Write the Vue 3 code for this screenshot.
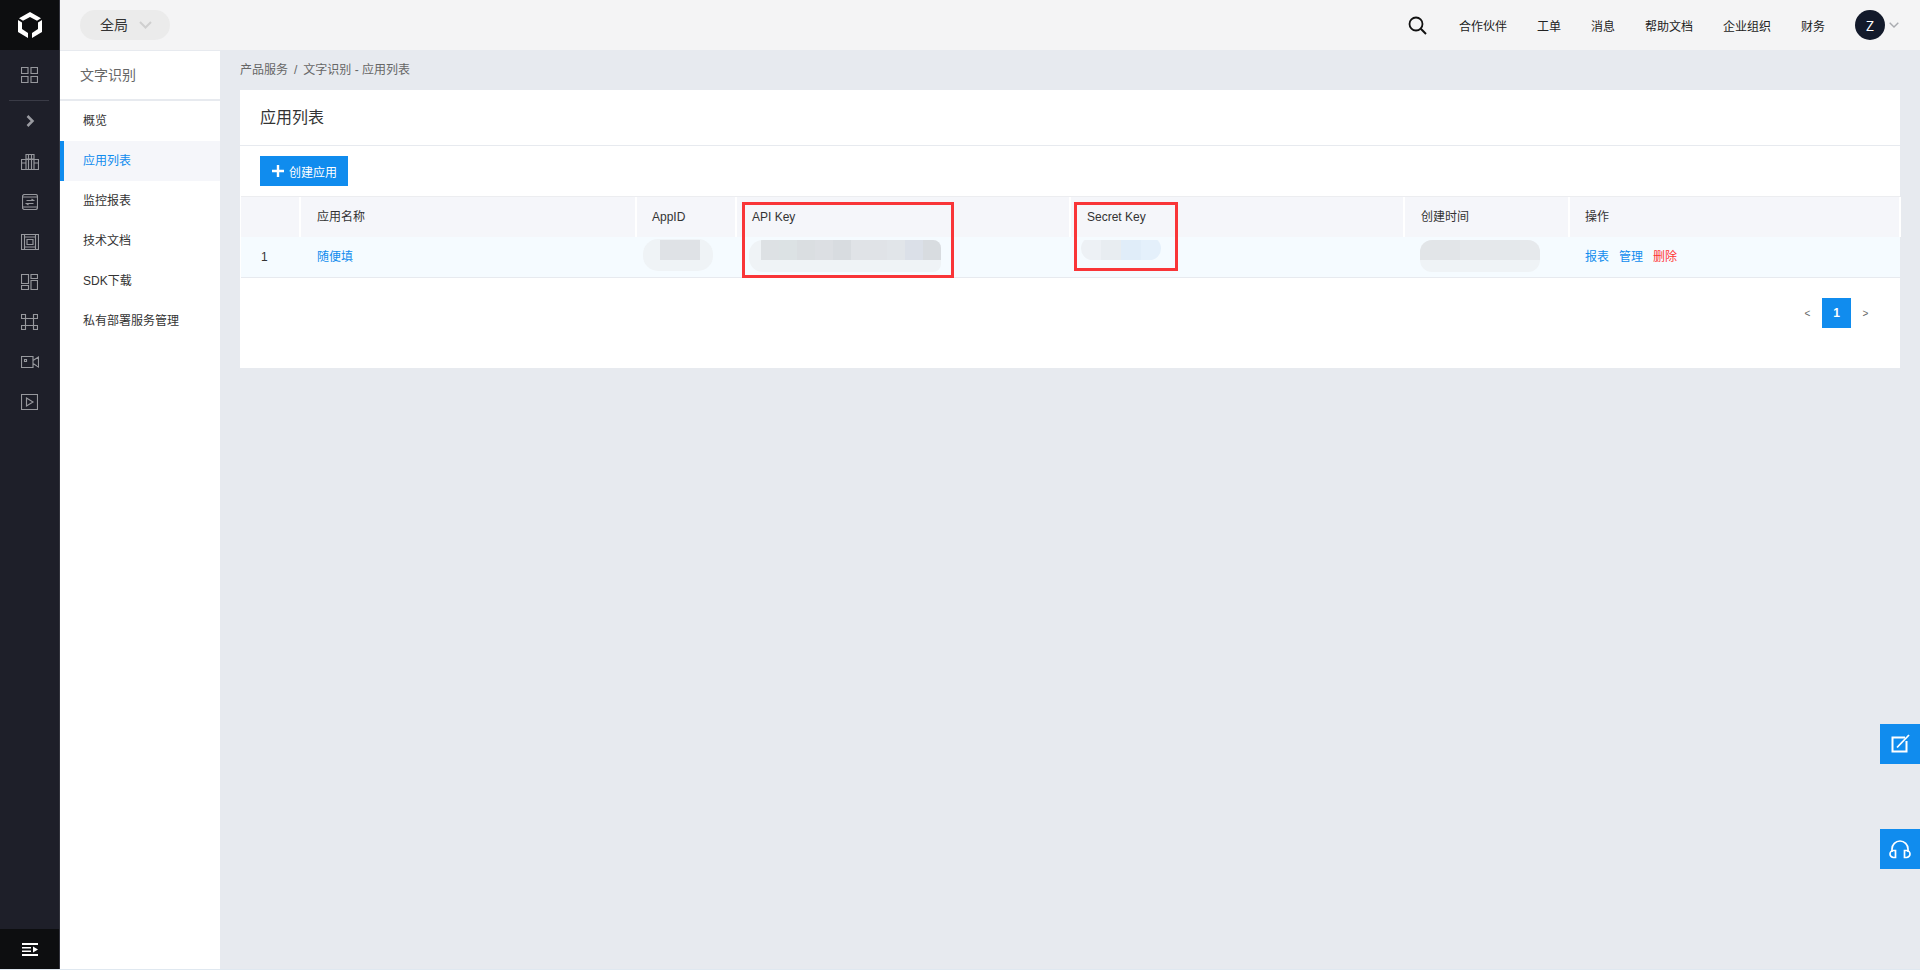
<script setup>
const menu = ['概览', '应用列表', '监控报表', '技术文档', 'SDK下载', '私有部署服务管理']
const nav = ['合作伙伴', '工单', '消息', '帮助文档', '企业组织', '财务']
const cols = [
  { t: '', w: 60 }, { t: '应用名称', w: 336 }, { t: 'AppID', w: 100 }, { t: 'API Key', w: 334 },
  { t: 'Secret Key', w: 334 }, { t: '创建时间', w: 165 }, { t: '操作', w: 331 },
]
const apiTiles = ['#dde1e4', '#dce2e4', '#dadee1', '#dcdfe3', '#d8dce0', '#e0e3e7', '#e0e3e7', '#e1e5e9', '#dbe0e8', '#d8dce0']
const appTiles = ['#dfe2e6', '#dfe2e6']
const secretTiles = ['#edf1f5', '#e8edf1', '#e0edf9', '#e4f0fb']
const timeTiles = ['#e2e5e8', '#e2e5e8', '#e5e8eb', '#e5e8eb', '#e4e8eb', '#e6e9ec']
</script>

<template>
  <div class="page">
    <aside class="rail">
      <div class="logo">
        <svg width="24" height="26" viewBox="0 0 24 26">
          <path fill="#fff" d="M12 0l11 6.200-4 2.600L12 5 5 8.800 1 6.200z" />
          <path fill="#fff" d="M0 8l4 2.500V17l6 4v5L0 20zM24 8l-4 2.500V17l-6 4v5l10-6z" />
        </svg>
      </div>
      <div class="rail-top">
        <svg width="17" height="16" viewBox="0 0 17 16" class="ico"><path d="M.5.500h6.500v6H.5zM10 .500h6.500v6H10zM.5 9.500h6.500v6H.5zM10 9.500h6.500v6H10z" /></svg>
      </div>
      <div class="rail-line"></div>
      <div class="rail-arrow">
        <svg width="9" height="12" viewBox="0 0 9 12"><path d="M1.500 1l5 5-5 5" fill="none" stroke="#9a9ba1" stroke-width="2.500" /></svg>
      </div>
      <div class="rail-item">
        <svg width="18" height="16" viewBox="0 0 18 16" class="ico"><path d="M.5 5.500h17v10H.5zM5 .5h8v15H5zM7.500 .5v15M10.500 .5v15M.5 9h4.500M13 9h4.500M5 5h8" /></svg>
      </div>
      <div class="rail-item">
        <svg width="16" height="16" viewBox="0 0 16 16" class="ico"><path d="M2.500.5h11a2 2 0 0 1 2 2v11a2 2 0 0 1-2 2h-11a2 2 0 0 1-2-2v-11a2 2 0 0 1 2-2zM1 3h14M1 13h14M4.500 6.500h7l-2-1.500M11.500 9.500h-7l2 1.500" /></svg>
      </div>
      <div class="rail-item">
        <svg width="18" height="16" viewBox="0 0 18 16" class="ico"><path d="M.5.500h17v15H.5zM3.500.5v15M14.500.5v15M3.500 3h11M3.500 13h11M6 5.500h6v5H6z" /></svg>
      </div>
      <div class="rail-item">
        <svg width="17" height="16" viewBox="0 0 17 16" class="ico"><path d="M.5.500h7v9h-7zM10 .500h6.500v4H10zM10 6.500h6.500v9H10zM.5 11.500h7v4h-7z" /></svg>
      </div>
      <div class="rail-item">
        <svg width="17" height="16" viewBox="0 0 17 16" class="ico"><path d="M.5.500h4v4h-4zM12.500.500h4v4h-4zM.5 11.500h4v4h-4zM12.500 11.500h4v4h-4zM4.500 4.500h8v7h-8z" /></svg>
      </div>
      <div class="rail-item">
        <svg width="18" height="12" viewBox="0 0 18 12" class="ico"><path d="M.5.500h11.500v11H.5zM12 4.500l5.500-3.500v10L12 7.500M3.500 3.500h2v2h-2z" /></svg>
      </div>
      <div class="rail-item">
        <svg width="17" height="16" viewBox="0 0 17 16" class="ico"><path d="M.5.500h16v15H.5zM5.500 4l6.500 4-6.500 4z" /></svg>
      </div>
      <div class="rail-foot">
        <svg width="16" height="13" viewBox="0 0 16 13">
          <path fill="#fff" d="M0 0h16v2H0zM0 4h9v1.500H0zM0 7.500h9V9H0zM0 11h16v2H0zM11 3.500l5 3-5 3z" />
        </svg>
      </div>
    </aside>

    <div class="shell">
      <header class="topbar">
        <div class="scope">
          <span>全局</span>
          <svg width="13" height="8" viewBox="0 0 13 8"><path d="M1 1l5.500 5.500L12 1" fill="none" stroke="#cfcfcf" stroke-width="2" /></svg>
        </div>
        <div class="grow"></div>
        <svg class="search" width="19" height="19" viewBox="0 0 19 19">
          <circle cx="8" cy="8" r="6.500" fill="none" stroke="#111" stroke-width="1.800" />
          <path d="M12.800 12.800L18 18" stroke="#111" stroke-width="2" />
        </svg>
        <nav class="nav">
          <a v-for="n in nav" :key="n">{{ n }}</a>
        </nav>
        <div class="avatar">Z</div>
        <svg class="caret" width="10" height="6" viewBox="0 0 10 6"><path d="M.7.700L5 5l4.300-4.300" fill="none" stroke="#a9abb0" stroke-width="1.400" /></svg>
      </header>

      <div class="body">
        <aside class="sub">
          <div class="sub-title">文字识别</div>
          <ul class="sub-list">
            <li v-for="(m, i) in menu" :key="m" :class="{ active: i === 1 }">{{ m }}</li>
          </ul>
        </aside>

        <main class="main">
          <div class="crumb">产品服务<span class="sep">/</span>文字识别 - 应用列表</div>
          <section class="card">
            <h2 class="card-title">应用列表</h2>
            <div class="tools">
              <button class="create">
                <svg width="12" height="12" viewBox="0 0 12 12"><path d="M6 0v12M0 6h12" stroke="#fff" stroke-width="2.400" /></svg>
                <span>创建应用</span>
              </button>
            </div>
            <div class="table">
              <div class="tr head">
                <div v-for="c in cols" :key="c.t" class="th" :style="{ width: c.w + 'px' }">{{ c.t }}</div>
              </div>
              <div class="tr row">
                <div class="td idx" :style="{ width: cols[0].w + 'px' }">1</div>
                <div class="td" :style="{ width: cols[1].w + 'px' }"><a class="link">随便填</a></div>
                <div class="td" :style="{ width: cols[2].w + 'px' }">
                  <div class="blur b-app"><div class="tiles"><i v-for="(t, i) in appTiles" :key="i" :style="{ background: t }"></i></div></div>
                </div>
                <div class="td" :style="{ width: cols[3].w + 'px' }">
                  <div class="blur b-api"><div class="tiles"><i v-for="(t, i) in apiTiles" :key="i" :style="{ background: t }"></i></div></div>
                </div>
                <div class="td" :style="{ width: cols[4].w + 'px' }">
                  <div class="blur b-secret"><div class="tiles"><i v-for="(t, i) in secretTiles" :key="i" :style="{ background: t }"></i></div></div>
                </div>
                <div class="td" :style="{ width: cols[5].w + 'px' }">
                  <div class="blur b-time"><div class="tiles"><i v-for="(t, i) in timeTiles" :key="i" :style="{ background: t }"></i></div></div>
                </div>
                <div class="td ops" :style="{ width: cols[6].w + 'px' }">
                  <a class="link">报表</a><a class="link">管理</a><a class="del">删除</a>
                </div>
              </div>
              <div class="mark m-api"></div>
              <div class="mark m-secret"></div>
            </div>
            <div class="pager">
              <span class="arrow">&lt;</span>
              <span class="cur">1</span>
              <span class="arrow">&gt;</span>
            </div>
          </section>
        </main>
      </div>
    </div>

    <div class="float f1">
      <svg width="20" height="20" viewBox="0 0 20 20"><path d="M15 3.500H2.500v14h14V7" fill="none" stroke="#fff" stroke-width="2" /><path d="M19 1L7 13.500" stroke="#fff" stroke-width="1.800" /></svg>
    </div>
    <div class="float f2">
      <svg width="22" height="20" viewBox="0 0 22 20"><path d="M3 13V10a8 8 0 0 1 16 0v3" fill="none" stroke="#fff" stroke-width="1.700" /><path d="M6.500 11.500v7H4.500a3.500 3.500 0 0 1 0-7zM15.500 11.500v7h2a3.500 3.500 0 0 0 0-7z" fill="none" stroke="#fff" stroke-width="1.700" /></svg>
    </div>
  </div>
</template>

<style scoped>
.page {
  position: relative;
  display: flex;
  height: 970px;
  overflow: hidden;
  background: #dfe8f0;
  font-family: "Liberation Sans", "Noto Sans CJK SC", sans-serif;
  font-size: 12px;
  color: #333;
}
.rail {
  display: flex;
  flex-direction: column;
  align-items: stretch;
  flex: none;
  width: 60px;
  height: 969px;
  box-sizing: border-box;
  background: #1e1f29;
  border-right: 1px solid #33343d;
}
.logo {
  display: flex;
  align-items: center;
  justify-content: center;
  height: 50px;
  background: #0d0e10;
}
.ico { fill: none; stroke: #97989d; stroke-width: 1.150; }
.rail-top { display: flex; align-items: center; justify-content: center; height: 50px; }
.rail-line { height: 1px; margin: 0 10px 0 9px; background: #3a3b46; }
.rail-arrow { display: flex; align-items: center; justify-content: center; height: 40px; padding-left: 2px; }
.rail-item { display: flex; align-items: center; justify-content: center; height: 40px; }
.rail-arrow + .rail-item { margin-top: 1px; }
.rail-foot {
  display: flex;
  align-items: center;
  justify-content: center;
  height: 40px;
  margin-top: auto;
  background: #0d0e10;
}
.shell { display: flex; flex-direction: column; flex: 1; min-width: 0; height: 969px; }
.topbar {
  display: flex;
  align-items: center;
  flex: none;
  height: 50px;
  padding-left: 20px;
  padding-right: 21px;
  background: #f4f4f5;
  border-bottom: 1px solid #e7eaef;
}
.scope {
  display: flex;
  align-items: center;
  gap: 11px;
  box-sizing: border-box;
  width: 90px;
  height: 30px;
  padding-left: 20px;
  border-radius: 15px;
  background: #ebebeb;
  font-size: 14px;
  line-height: 30px;
}
.grow { flex: 1; }
.search { margin-right: 32px; }
.nav { display: flex; gap: 30px; color: #222; font-size: 12px; }
.avatar {
  display: flex;
  align-items: center;
  justify-content: center;
  width: 30px;
  height: 30px;
  margin-left: 30px;
  border-radius: 50%;
  background: #131a2b;
  color: #fff;
  font-size: 14px;
  font-family: "Open Sans", sans-serif;
}
.caret { margin-left: 4px; }
.body { display: flex; flex: 1; min-height: 0; }
.sub { flex: none; width: 160px; background: #fff; }
.sub-title {
  height: 48px;
  padding-left: 20px;
  border-bottom: 2px solid #e7eaef;
  color: #666;
  font-size: 14px;
  line-height: 49px;
}
.sub-list { margin: 0; padding: 0; list-style: none; }
.sub-list li {
  height: 40px;
  padding-left: 23px;
  line-height: 40px;
  color: #333;
}
.sub-list li.active {
  padding-left: 19px;
  border-left: 4px solid #108cee;
  background: #f5f6fa;
  color: #108cee;
}
.main { flex: 1; min-width: 0; padding: 0 20px; background: #e7eaef; }
.crumb { height: 39px; line-height: 38px; color: #666; }
.sep { margin: 0 6px; }
.card { height: 278px; background: #fff; }
.card-title {
  margin: 0;
  height: 55px;
  padding-left: 20px;
  border-bottom: 1px solid #e7eaef;
  font-size: 16px;
  font-weight: 400;
  line-height: 55px;
  color: #333;
}
.tools { height: 50px; padding: 10px 0 0 20px; box-sizing: border-box; }
.create {
  display: flex;
  align-items: center;
  gap: 5px;
  width: 88px;
  height: 30px;
  padding: 0 0 0 12px;
  border: 0;
  background: #108cee;
  color: #fff;
  font: inherit;
}
.table {
  position: relative;
  margin-left: 1px;
  border-top: 1px solid #ecedf0;
  border-bottom: 1px solid #e7eaef;
}
.tr { display: flex; height: 40px; }
.head { background: #f5f6fa; }
.row { background: #f5fbff; }
.th {
  box-sizing: border-box;
  flex: none;
  padding-left: 16px;
  border-right: 2px solid #fff;
  line-height: 40px;
}
.th:nth-child(3), .th:nth-child(4), .th:nth-child(7) { padding-left: 15px; }
.td { position: relative; box-sizing: border-box; flex: none; padding-left: 16px; line-height: 40px; }
.td.idx { padding-left: 20px; }
.link { color: #108cee; }
.del { color: #f33; }
.ops { display: flex; gap: 10px; padding-left: 15px; }
.blur { position: absolute; border-radius: 15px; background: #eff3f6; overflow: hidden; }
.tiles { display: flex; position: absolute; height: 20px; }
.tiles i { display: block; flex: none; width: 20px; height: 20px; }
.b-app { left: 6px; top: 2px; width: 70px; height: 32px; }
.b-app .tiles { left: 17px; top: 1px; width: 40px; }
.b-api { left: 12px; top: 3px; width: 192px; height: 32px; border-radius: 14px 8px 8px 14px; }
.b-api .tiles { left: 12px; top: 0; width: 180px; }
.b-api .tiles i { width: 18px; }
.b-secret { left: 10px; top: 0; width: 80px; height: 23px; border-radius: 12px; background: transparent; }
.b-secret .tiles { left: 0; top: 3px; width: 80px; }
.b-time { left: 15px; top: 3px; width: 120px; height: 32px; border-radius: 12px; }
.b-time .tiles { left: 0; top: 0; width: 120px; }
.mark { position: absolute; box-sizing: border-box; border: 3px solid #f93538; }
.m-api { left: 501px; top: 5px; width: 212px; height: 76px; }
.m-secret { left: 833px; top: 5px; width: 104px; height: 69px; }
.pager {
  display: flex;
  align-items: center;
  justify-content: flex-end;
  gap: 0;
  height: 30px;
  margin-top: 20px;
  padding-right: 20px;
}
.arrow { width: 29px; text-align: center; font-size: 10px; color: #666; }
.cur {
  width: 29px;
  height: 30px;
  background: #108cee;
  color: #fff;
  font-weight: 700;
  text-align: center;
  line-height: 30px;
}
.float {
  position: absolute;
  right: 0;
  display: flex;
  align-items: center;
  justify-content: center;
  width: 40px;
  height: 40px;
  background: #108cee;
}
.f1 { top: 724px; }
.f2 { top: 829px; }
</style>
